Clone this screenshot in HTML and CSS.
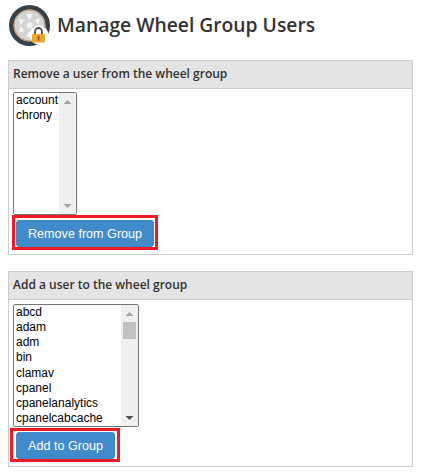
FILE: index.html
```html
<!DOCTYPE html>
<html lang="en">
<head>
<meta charset="utf-8">
<title>Manage Wheel Group Users</title>
<link rel="stylesheet" href="styles.css">
</head>
<body>
<header class="page-title">
  <svg class="title-icon" width="44" height="44" viewBox="0 0 44 44" aria-hidden="true">
    <circle cx="21.500" cy="21.500" r="18.200" fill="#d4d4d4" stroke="#36414a" stroke-width="4.600"/>
    <circle cx="21.500" cy="21.500" r="15.400" fill="none" stroke="#c29a78" stroke-width="1.200"/>
    <g fill="#f4f4f4">
      <circle cx="21.500" cy="21.500" r="3"/>
      <polygon points="18,10 25,10 21.500,16"/>
      <polygon points="18,33 25,33 21.500,27"/>
      <polygon points="11,14.500 16.500,16 12.500,21"/>
      <polygon points="32,14.500 26.500,16 30.500,21"/>
      <polygon points="11,28.500 16.500,27 12.500,22"/>
    </g>
    <circle cx="31" cy="31" r="9.500" fill="#fff"/>
    <path d="M27 31v-3.500a3.500 3.500 0 0 1 7 0v3.500" fill="none" stroke="#4a4a4a" stroke-width="1.800"/>
    <rect x="24" y="30" width="13" height="8.500" rx="1" fill="#eea62f"/>
    <rect x="29.800" y="31.800" width="1.500" height="5" fill="#8a5a12"/>
  </svg>
  <h1 class="title-text">Manage Wheel Group Users</h1>
</header>

<main class="sections">
  <section class="panel">
    <h2 class="panel-head">Remove a user from the wheel group</h2>
    <form class="panel-body">
      <div class="listbox listbox-narrow">
        <select class="user-list" multiple size="8" aria-label="Wheel group users">
          <option>account</option>
          <option>chrony</option>
        </select>
        <div class="scrollbar" aria-hidden="true">
          <svg class="arrow" width="17" height="17" viewBox="0 0 17 17"><path class="arrow-off" d="M4.500 11 8.500 7 12.500 11Z"/></svg>
          <span class="scroll-space"></span>
          <svg class="arrow" width="17" height="17" viewBox="0 0 17 17"><path class="arrow-off" d="M4.500 7 8.500 11 12.500 7Z"/></svg>
        </div>
      </div>
      <div class="highlight">
        <button class="btn" type="button">Remove from Group</button>
      </div>
    </form>
  </section>

  <section class="panel">
    <h2 class="panel-head">Add a user to the wheel group</h2>
    <form class="panel-body">
      <div class="listbox listbox-wide">
        <select class="user-list" multiple size="8" aria-label="Available users">
          <option>abcd</option>
          <option>adam</option>
          <option>adm</option>
          <option>bin</option>
          <option>clamav</option>
          <option>cpanel</option>
          <option>cpanelanalytics</option>
          <option>cpanelcabcache</option>
          <option>cpanelconnecttrack</option>
          <option>cpanellogin</option>
          <option>cpanelphpmyadmin</option>
          <option>cpanelphppgadmin</option>
          <option>cpanelroundcube</option>
          <option>daemon</option>
          <option>dbus</option>
          <option>dovecot</option>
          <option>dovenull</option>
          <option>ftp</option>
          <option>games</option>
          <option>halt</option>
          <option>lp</option>
          <option>mail</option>
          <option>mailman</option>
          <option>mailnull</option>
          <option>named</option>
          <option>nobody</option>
          <option>ntp</option>
        </select>
        <div class="scrollbar" aria-hidden="true">
          <svg class="arrow" width="17" height="17" viewBox="0 0 17 17"><path class="arrow-off" d="M4.500 11 8.500 7 12.500 11Z"/></svg>
          <span class="scroll-thumb"></span>
          <span class="scroll-space"></span>
          <svg class="arrow" width="17" height="17" viewBox="0 0 17 17"><path class="arrow-on" d="M4.500 7 8.500 11 12.500 7Z"/></svg>
        </div>
      </div>
      <div class="highlight highlight-offset">
        <button class="btn" type="button">Add to Group</button>
      </div>
    </form>
  </section>
</main>
</body>
</html>
```
FILE: styles.css
```css
* { box-sizing: border-box; }

html, body { background: #fff; }

body {
  margin: 0;
  padding: 4px 9px 0 8px;
  font-family: "Open Sans", sans-serif;
  color: #333;
}

.page-title {
  display: flex;
  align-items: center;
  height: 44px;
  gap: 5px;
}

.title-icon { flex: none; }

.title-text {
  margin: 0;
  padding-bottom: 3px;
  font-size: 19.300px;
  line-height: 27px;
  font-weight: 600;
}

.sections {
  display: flex;
  flex-direction: column;
  gap: 16px;
  margin-top: 12px;
}

.panel { border: 1px solid #ccc; }

.panel-head {
  margin: 0;
  padding: 0 4px;
  height: 28px;
  line-height: 26px;
  font-size: 12px;
  font-weight: 600;
  background: #e4e4e4;
  border-bottom: 1px solid #ccc;
}

.panel-body {
  display: flex;
  flex-direction: column;
  align-items: flex-start;
  padding: 3px 4px 4px;
}

.panel + .panel .panel-body { padding-top: 4px; }

.listbox {
  display: flex;
  height: 123px;
  border: 1px solid #767676;
  border-radius: 2px;
  background: #fff;
}

.listbox-narrow { width: 64px; }
.listbox-wide { width: 126px; }

.user-list {
  display: block;
  flex: 1;
  min-width: 0;
  height: 121px;
  margin: 0;
  padding: 0;
  overflow: hidden;
  border: 0;
  outline: 0;
  font-family: "Liberation Sans", Arial, sans-serif;
  font-size: 12px;
  color: #000;
  background: #fff;
}

.user-list option { padding: 0 2px 1.140px; }

.scrollbar {
  flex: none;
  display: flex;
  flex-direction: column;
  width: 17px;
  background: #f0f0f0;
}

.arrow { display: block; flex: none; }
.arrow-off { fill: #a3a3a3; }
.arrow-on { fill: #505050; }

.scroll-thumb {
  flex: none;
  width: 13px;
  height: 17px;
  margin-left: 2px;
  background: #c1c1c1;
}

.scroll-space { flex: 1; }

.highlight {
  display: inline-flex;
  margin-left: -1px;
  padding: 2px 1px 0;
  border: 3px solid #ed1c24;
  background: #fff;
}

.highlight-offset {
  margin-top: 1px;
  margin-left: -3px;
  padding: 1px 2px 0 3px;
}

.btn {
  height: 27px;
  padding: 0 11px;
  border: 1px solid #3f87c6;
  border-radius: 3px;
  background: #428bca;
  color: #fff;
  font-family: "Liberation Sans", Arial, sans-serif;
  font-size: 12.600px;
  line-height: 20px;
}
```
